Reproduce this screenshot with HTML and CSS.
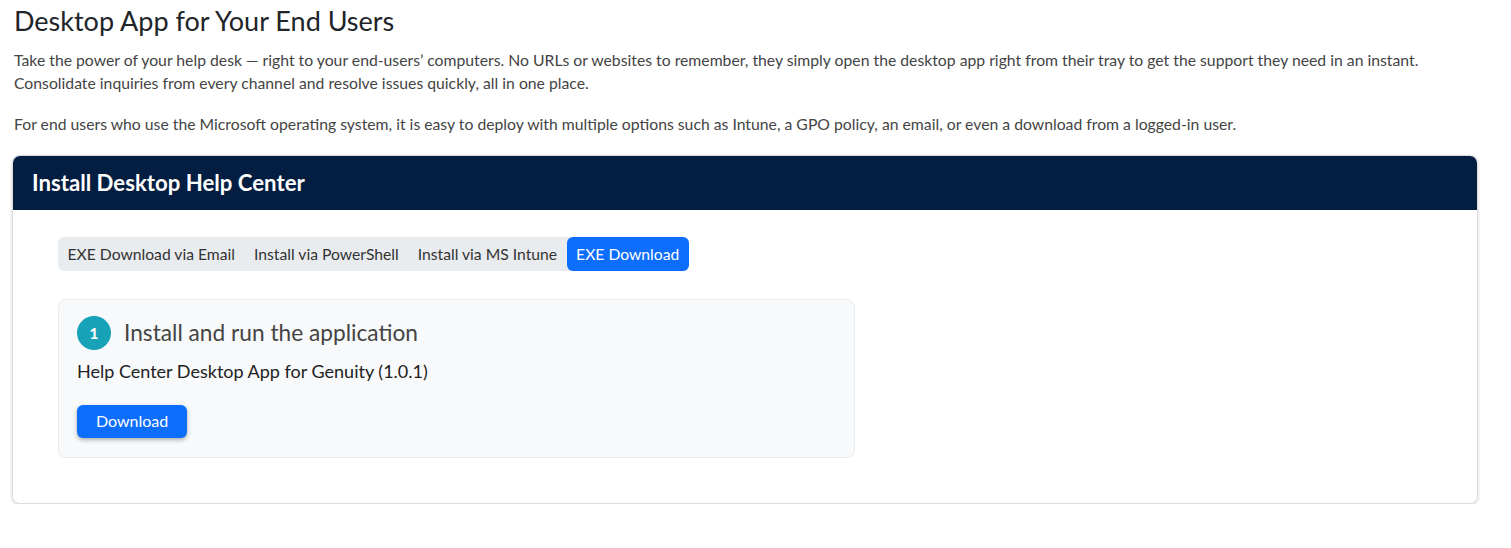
FILE: index.html
```html
<!DOCTYPE html>
<html lang="en">
<head>
  <meta charset="UTF-8">
  <meta name="viewport" content="width=device-width, initial-scale=1.0">
  <title>Desktop App for Your End Users</title>
  <link rel="stylesheet" href="styles.css">
</head>
<body>

  <div class="page">
    <h2 class="page-title">Desktop App for Your End Users</h2>
    <p class="intro">Take the power of your help desk — right to your end-users’ computers. No URLs or websites to remember, they simply open the desktop app right from their tray to get the support they need in an instant. Consolidate inquiries from every channel and resolve issues quickly, all in one place.</p>
    <p class="intro">For end users who use the Microsoft operating system, it is easy to deploy with multiple options such as Intune, a GPO policy, an email, or even a download from a logged-in user.</p>

    <div class="card">
      <div class="card-header">Install Desktop Help Center</div>
      <div class="card-body">
        <div class="tabs">
          <div class="tab">EXE Download via Email</div>
          <div class="tab">Install via PowerShell</div>
          <div class="tab">Install via MS Intune</div>
          <div class="tab active">EXE Download</div>
        </div>

        <div class="step">
          <div class="step-title">
            <span class="step-num">1</span>
            <span>Install and run the application</span>
          </div>
          <div class="step-text">Help Center Desktop App for Genuity (1.0.1)</div>
          <button class="btn-download">Download</button>
        </div>
      </div>
    </div>
  </div>

</body>
</html>
```

FILE: styles.css
```css
/* General Styles */
body {
  font-family: 'Lato', 'Open Sans', sans-serif;
  margin: 0;
  background: #fff;
  color: #333;
}

.page {
  width: 1466px;
  padding: 0 12px;
}

.page-title {
  font-size: 27px;
  font-weight: 400;
  color: #212529;
  margin: 5px 0 12px 2px;
  line-height: 32px;
}

.intro {
  font-size: 15.75px;
  line-height: 22.5px;
  color: #444;
  margin: 0 0 19px 2px;
}

/* Card */
.card {
  margin-top: 6px;
  border: 1px solid #ddd;
  border-radius: 8px;
  box-shadow: 0 1px 3px rgba(0, 0, 0, 0.2);
  overflow: hidden;
}

.card-header {
  background: #041e42;
  color: #fff;
  font-size: 22.2px;
  font-weight: 700;
  height: 54px;
  line-height: 54px;
  padding: 0 19px;
}

.card-body {
  padding: 27px 45px 45px;
}

/* Tabs */
.tabs {
  display: inline-flex;
  background: #e9ecef;
  border-radius: 6px;
  height: 34px;
}

.tab {
  font-size: 15.7px;
  color: #333;
  padding: 0 9.5px;
  line-height: 34px;
  border-radius: 6px;
}

.tab.active {
  background: #0d6efd;
  color: #fff;
}

/* Step box */
.step {
  margin-top: 28px;
  width: 759px;
  background: #f8f9fa;
  border: 1px solid #e9ecef;
  border-radius: 8px;
  padding: 16px 18px 19px;
}

.step-title {
  display: flex;
  align-items: center;
  gap: 13px;
  font-size: 22.7px;
  color: #444;
  line-height: 34px;
}

.step-num {
  width: 34px;
  height: 34px;
  border-radius: 50%;
  background: #17a2b8;
  color: #fff;
  font-size: 16px;
  font-weight: 700;
  display: flex;
  justify-content: center;
  align-items: center;
}

.step-text {
  font-size: 18px;
  color: #222;
  margin-top: 9px;
  line-height: 24px;
}

.btn-download {
  margin-top: 22px;
  font-family: inherit;
  font-size: 16px;
  color: #fff;
  background: #0d6efd;
  border: none;
  border-radius: 6px;
  height: 33px;
  padding: 0 19px 2px;
  box-shadow: 0 2px 4px rgba(0, 0, 0, 0.3);
  cursor: pointer;
}
```
